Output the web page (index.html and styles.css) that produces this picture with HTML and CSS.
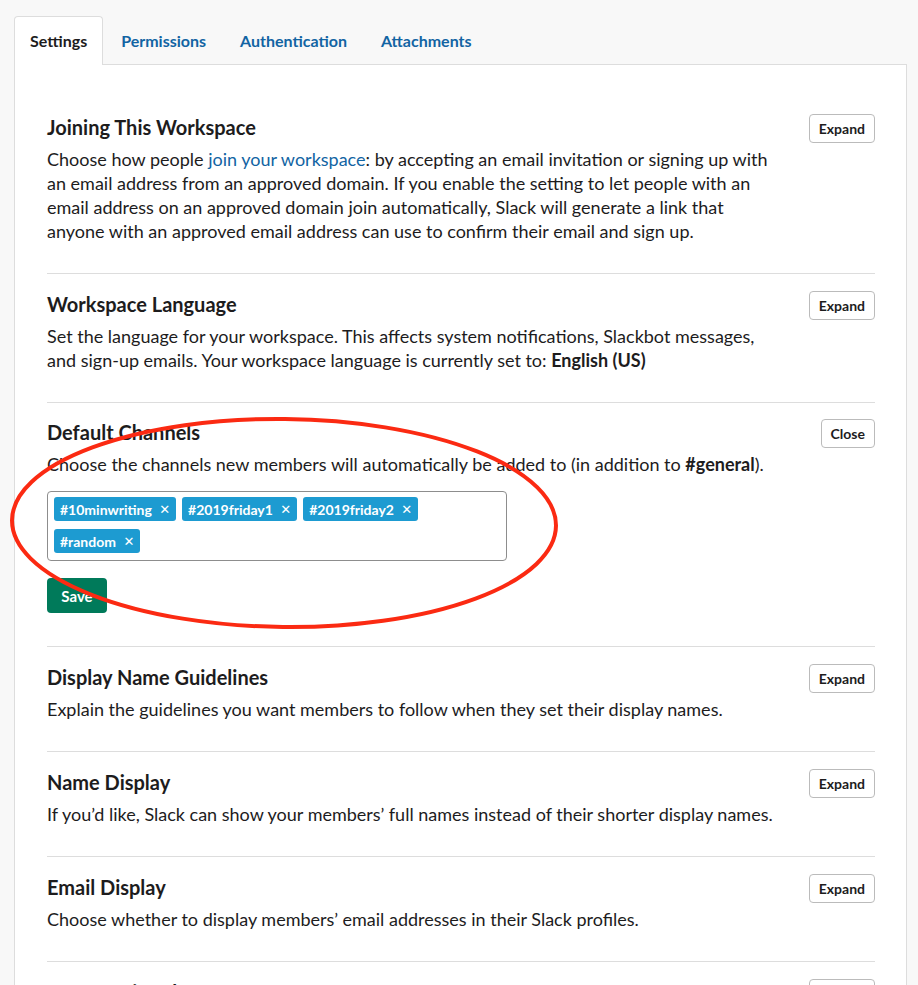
FILE: index.html
```html
<!DOCTYPE html>
<html>
<head>
<meta charset="utf-8">
<link rel="stylesheet" href="styles.css">
</head>
<body>
<div class="page">
  <nav class="tabs">
    <a class="tab active">Settings</a>
    <a class="tab">Permissions</a>
    <a class="tab">Authentication</a>
    <a class="tab">Attachments</a>
  </nav>
  <main class="panel">
    <section class="section">
      <h2 class="title">Joining This Workspace</h2>
      <button class="btn">Expand</button>
      <p class="desc">Choose how people <a class="link">join your workspace</a>: by accepting an email invitation or signing up with an email address from an approved domain. If you enable the setting to let people with an email address on an approved domain join automatically, Slack will generate a link that anyone with an approved email address can use to confirm their email and sign up.</p>
    </section>
    <section class="section">
      <h2 class="title">Workspace Language</h2>
      <button class="btn">Expand</button>
      <p class="desc">Set the language for your workspace. This affects system notifications, Slackbot messages, and sign-up emails. Your workspace language is currently set to: <b>English (US)</b></p>
    </section>
    <section class="section open">
      <h2 class="title">Default Channels</h2>
      <button class="btn">Close</button>
      <div class="body">
        <p class="desc">Choose the channels new members will automatically be added to (in addition to <b>#general</b>).</p>
        <div class="tagbox">
          <span class="tag">#10minwriting <span class="x">✕</span></span>
          <span class="tag">#2019friday1 <span class="x">✕</span></span>
          <span class="tag">#2019friday2 <span class="x">✕</span></span>
          <span class="tag">#random <span class="x">✕</span></span>
        </div>
        <button class="save">Save</button>
      </div>
    </section>
    <section class="section">
      <h2 class="title">Display Name Guidelines</h2>
      <button class="btn">Expand</button>
      <p class="desc">Explain the guidelines you want members to follow when they set their display names.</p>
    </section>
    <section class="section">
      <h2 class="title">Name Display</h2>
      <button class="btn">Expand</button>
      <p class="desc">If you’d like, Slack can show your members’ full names instead of their shorter display names.</p>
    </section>
    <section class="section">
      <h2 class="title">Email Display</h2>
      <button class="btn">Expand</button>
      <p class="desc">Choose whether to display members’ email addresses in their Slack profiles.</p>
    </section>
    <section class="section">
      <h2 class="title">Do Not Disturb</h2>
      <button class="btn">Expand</button>
      <p class="desc">Set a default schedule for Do Not Disturb.</p>
    </section>
  </main>
  <svg class="circle" width="918" height="985" viewBox="0 0 918 985">
    <ellipse cx="284" cy="523" rx="272" ry="104" fill="none" stroke="#fb2a12" stroke-width="4" transform="rotate(0.6 284 523)"/>
  </svg>
</div>
</body>
</html>
```
FILE: styles.css
```css
* { box-sizing: border-box; }
html, body { margin: 0; padding: 0; }
body {
  background: #f8f8f8;
  font-family: Lato, "Noto Sans", sans-serif;
  color: #1d1c1d;
  overflow: hidden;
}
.page {
  position: relative;
  padding: 16px 11px 0 14px;
  height: 985px;
  overflow: hidden;
}
.tabs {
  display: flex;
  gap: 2px;
  height: 48px;
  position: relative;
  z-index: 1;
}
.tab {
  display: flex;
  align-items: center;
  padding: 0 15px;
  font-size: 16px;
  font-weight: 700;
  color: #1264a3;
  border: 1px solid transparent;
  border-bottom: none;
  border-radius: 4px 4px 0 0;
}
.tab.active {
  background: #fff;
  color: #1d1c1d;
  border-color: #dddddd;
  height: 49px;
  padding: 0 15px 1px;
}
.panel {
  background: #fff;
  border: 1px solid #dddddd;
  padding: 32px 31px 0 32px;
  min-height: 1000px;
}
.section {
  display: grid;
  grid-template-columns: 1fr auto;
  column-gap: 20px;
  padding: 18px 0 30px;
  border-bottom: 1px solid #dddddd;
}
.section.open {
  padding-top: 17px;
  padding-bottom: 33px;
}
.title {
  grid-column: 1;
  grid-row: 1;
  margin: 0;
  font-size: 20px;
  line-height: 24px;
  font-weight: 700;
}
.btn {
  grid-column: 2;
  grid-row: 1 / span 2;
  align-self: start;
  margin-top: -1px;
  height: 29px;
  padding: 0 9px;
  background: #fff;
  border: 1px solid #bbbbbb;
  border-radius: 4px;
  font-family: inherit;
  font-size: 14px;
  font-weight: 700;
  color: #1d1c1d;
}
.desc {
  grid-column: 1;
  grid-row: 2;
  margin: 8px 0 0;
  font-size: 18px;
  line-height: 24px;
  max-width: 730px;
}
.body {
  grid-column: 1;
  grid-row: 2;
}
.link { color: #1264a3; }
.tagbox {
  margin-top: 15px;
  width: 460px;
  height: 70px;
  border: 1px solid #8d8d8d;
  border-radius: 4px;
  padding: 5px 6px;
  display: flex;
  flex-wrap: wrap;
  align-content: flex-start;
  column-gap: 6px;
  row-gap: 8px;
}
.tag {
  display: inline-flex;
  align-items: center;
  height: 24px;
  padding: 0 6px;
  background: #1d9bd1;
  color: #fff;
  border-radius: 3px;
  font-size: 14px;
  font-weight: 700;
  white-space: pre;
}
.x {
  font-size: 13px;
  font-weight: 400;
  margin-left: 4px;
  font-family: "DejaVu Sans", sans-serif;
}
.save {
  display: block;
  margin-top: 17px;
  width: 60px;
  height: 35px;
  background: #007a5a;
  color: #fff;
  border: none;
  border-radius: 4px;
  font-family: inherit;
  font-size: 15px;
  font-weight: 700;
}
.circle {
  position: absolute;
  left: 0;
  top: 0;
  pointer-events: none;
}
```
